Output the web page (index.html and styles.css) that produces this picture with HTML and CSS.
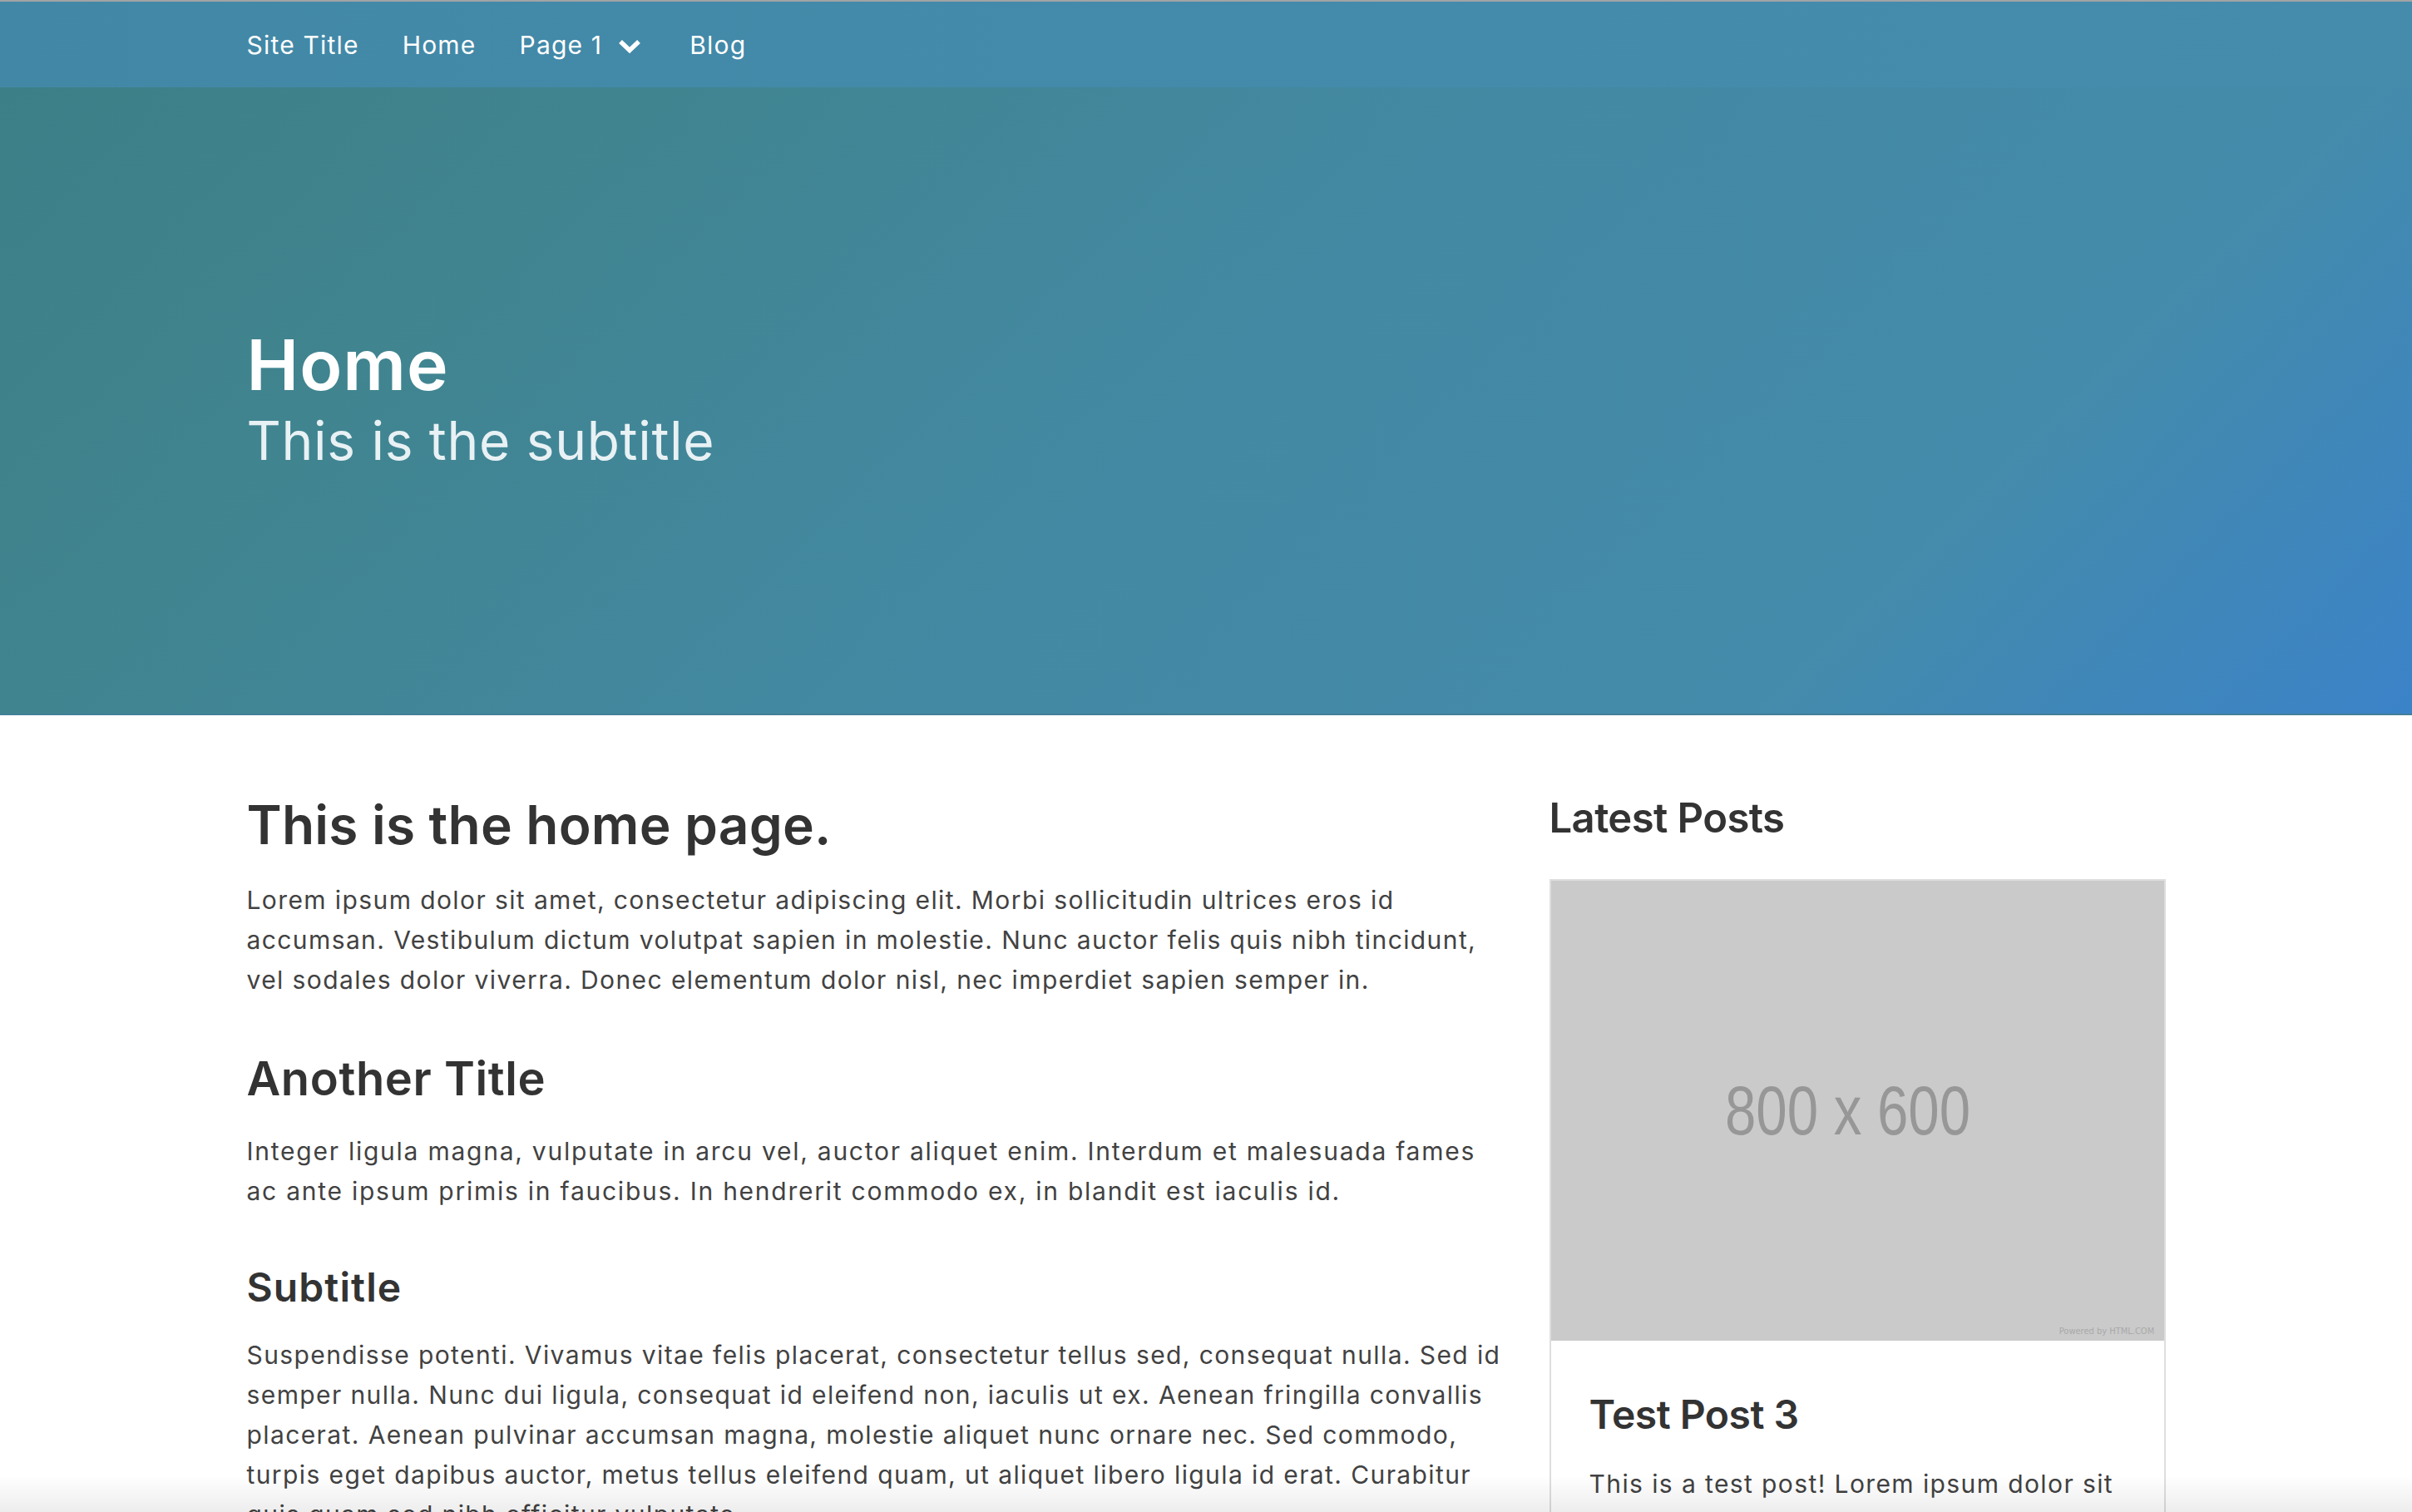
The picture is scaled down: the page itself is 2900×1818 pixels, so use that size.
FILE: index.html
```html
<!DOCTYPE html>
<html lang="en">
<head>
<meta charset="utf-8">
<title>Home</title>
<link rel="stylesheet" href="styles.css">
</head>
<body>
<header class="site-header">
  <nav class="navbar">
    <div class="container nav-inner">
      <a class="nav-link" href="#">Site Title</a>
      <a class="nav-link" href="#">Home</a>
      <a class="nav-link nav-dropdown" href="#">Page 1
        <svg class="chevron" width="28" height="18" viewBox="0 0 28 18" aria-hidden="true"><path d="M3 3 L14 13.5 L25 3" fill="none" stroke="#fff" stroke-width="5.5" stroke-linejoin="miter"/></svg>
      </a>
      <a class="nav-link" href="#">Blog</a>
    </div>
  </nav>
  <section class="hero">
    <div class="container">
      <h1 class="hero-title">Home</h1>
      <p class="hero-subtitle">This is the subtitle</p>
    </div>
  </section>
</header>

<main class="container content">
  <article class="main-col">
    <h1 class="page-title">This is the home page.</h1>
    <p>Lorem ipsum dolor sit amet, consectetur adipiscing elit. Morbi sollicitudin ultrices eros id accumsan. Vestibulum dictum volutpat sapien in molestie. Nunc auctor felis quis nibh tincidunt, vel sodales dolor viverra. Donec elementum dolor nisl, nec imperdiet sapien semper in.</p>
    <h2 class="section-title">Another Title</h2>
    <p class="text-wide">Integer ligula magna, vulputate in arcu vel, auctor aliquet enim. Interdum et malesuada fames ac ante ipsum primis in faucibus. In hendrerit commodo ex, in blandit est iaculis id.</p>
    <h3 class="sub-title">Subtitle</h3>
    <p>Suspendisse potenti. Vivamus vitae felis placerat, consectetur tellus sed, consequat nulla. Sed id semper nulla. Nunc dui ligula, consequat id eleifend non, iaculis ut ex. Aenean fringilla convallis placerat. Aenean pulvinar accumsan magna, molestie aliquet nunc ornare nec. Sed commodo, turpis eget dapibus auctor, metus tellus eleifend quam, ut aliquet libero ligula id erat. Curabitur quis quam sed nibh efficitur vulputate.</p>
  </article>

  <aside class="sidebar">
    <h3 class="sidebar-title">Latest Posts</h3>
    <div class="post-card">
      <div class="placeholder">
        <span class="placeholder-size">800 x 600</span>
        <span class="placeholder-credit">Powered by HTML.COM</span>
      </div>
      <div class="post-body">
        <h3 class="post-title">Test Post 3</h3>
        <p>This is a test post! Lorem ipsum dolor sit amet, consectetur adipiscing elit. Morbi sollicitudin ultrices eros id accumsan.</p>
      </div>
    </div>
  </aside>
</main>
<div class="bottom-fade"></div>
</body>
</html>
```

FILE: styles.css
```css
* { box-sizing: border-box; }

html, body {
  margin: 0;
  padding: 0;
  background: #ffffff;
}

body {
  font-family: "Inter", "Open Sans", "Liberation Sans", sans-serif;
  color: #424242;
  font-size: 30px;
  line-height: 48px;
  letter-spacing: 1.4px;
}

.container {
  max-width: 2307px;
  margin: 0 auto;
}

/* ---------- Nav ---------- */
.navbar {
  height: 105px;
  border-top: 2px solid #a2a4a6;
  background: linear-gradient(90deg, #4288a6 0%, #448aab 60%, #458bac 100%);
}

.nav-inner {
  height: 100%;
  display: flex;
  align-items: center;
  gap: 52px;
}

.nav-link {
  color: #ffffff;
  text-decoration: none;
  font-size: 30px;
  line-height: 40px;
  font-weight: 400;
  letter-spacing: 1.2px;
  display: flex;
  align-items: center;
}

.nav-dropdown {
  gap: 19px;
  margin-right: 6px;
}

.chevron { display: block; margin-top: 4px; }

/* ---------- Hero ---------- */
.hero {
  height: 755px;
  display: flex;
  align-items: center;
  background: linear-gradient(135deg, #3d7f87 0%, #40848f 20%, #4389a3 50%, #448bab 78%, #3b83c8 100%);
  border-bottom: 2px solid #437f98;
  color: #ffffff;
}

.hero .container { width: 100%; padding-bottom: 2px; }

.hero-title {
  margin: 0;
  font-size: 84px;
  line-height: 92px;
  font-weight: 600;
  letter-spacing: 1px;
}

.hero-subtitle {
  margin: 6px 0 0;
  font-size: 64px;
  line-height: 77px;
  font-weight: 400;
  letter-spacing: 0.7px;
  color: #e8f1f4;
}

/* ---------- Content ---------- */
.content {
  display: grid;
  grid-template-columns: 1fr 741px;
  gap: 54px;
  padding-top: 93px;
}

.main-col p,
.post-body p {
  margin: 0;
}

.main-col .text-wide { letter-spacing: 1.75px; }

.page-title,
.section-title,
.sub-title,
.sidebar-title,
.post-title {
  color: #333333;
  font-weight: 600;
}

.page-title {
  font-size: 64px;
  line-height: 77px;
  letter-spacing: 0.2px;
  margin: 0 0 28px;
}

.section-title {
  font-size: 56px;
  line-height: 67px;
  letter-spacing: 0.6px;
  margin: 62px 0 29px;
}

.sub-title {
  font-size: 48px;
  line-height: 58px;
  letter-spacing: 1.1px;
  margin: 63px 0 28px;
}

/* ---------- Sidebar ---------- */
.sidebar-title {
  font-size: 49px;
  line-height: 62px;
  letter-spacing: -0.6px;
  margin: 0 0 42px;
}

.post-card {
  border: 2px solid #dedede;
  background: #ffffff;
}

.placeholder {
  position: relative;
  aspect-ratio: 4 / 3;
  background: #cacaca;
  display: flex;
  align-items: center;
  justify-content: center;
}

.placeholder-size {
  display: inline-block;
  font-family: "Liberation Sans", Arial, sans-serif;
  font-size: 84px;
  line-height: 1;
  letter-spacing: 0;
  color: #979797;
  transform: scaleX(0.8);
  margin-right: 24px;
}

.placeholder-credit {
  position: absolute;
  right: 11px;
  bottom: 4px;
  font-family: "DejaVu Sans", sans-serif;
  font-size: 11px;
  line-height: 14px;
  letter-spacing: 0;
  color: #a9a9a9;
  transform: scaleX(0.9);
  transform-origin: right center;
}

.post-body {
  padding: 60px 46px 40px;
}

.post-title {
  font-size: 48px;
  line-height: 58px;
  letter-spacing: -0.5px;
  margin: 0 0 30px;
}

/* ---------- Screen bottom fade ---------- */
.bottom-fade {
  position: fixed;
  left: 0;
  right: 0;
  bottom: 0;
  height: 44px;
  pointer-events: none;
  background: linear-gradient(180deg, rgba(0,0,0,0) 0%, rgba(0,0,0,0.07) 100%);
}
```
